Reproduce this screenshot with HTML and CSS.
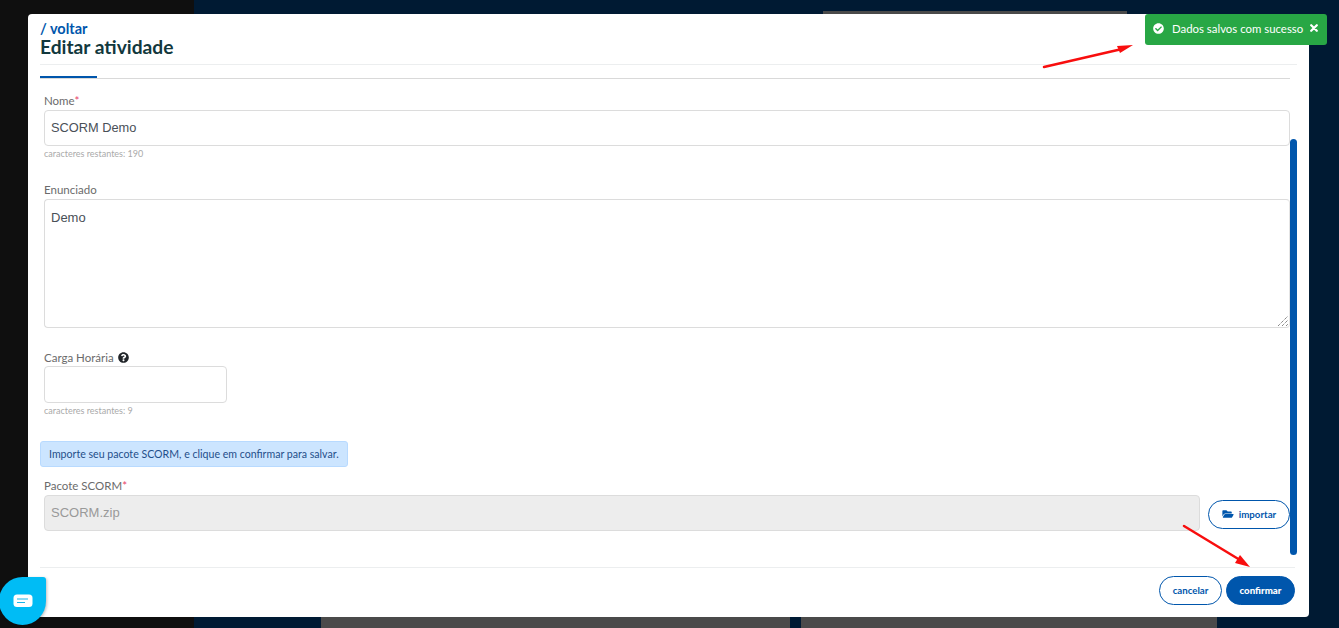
FILE: index.html
```html
<!DOCTYPE html>
<html lang="pt-BR">
<head>
<meta charset="utf-8">
<title>Editar atividade</title>
<link rel="stylesheet" href="styles.css">
</head>
<body>
<div class="page">
  <div class="sidebar"></div>
  <div class="main">
    <div class="strip strip-top"></div>
    <div class="strip strip-left"></div>
    <div class="strip strip-right"></div>
  </div>

  <section class="modal">
    <header class="modal-head">
      <a class="back">/ voltar</a>
      <h1 class="title">Editar atividade</h1>
    </header>
    <div class="tabs"><span class="tab-active"></span></div>
    <div class="modal-body">
      <form class="form">
        <label class="label label-nome">Nome<span class="req">*</span></label>
        <div class="input input-name">SCORM Demo</div>
        <p class="hint">caracteres restantes: 190</p>

        <label class="label label-enun">Enunciado</label>
        <div class="textarea">Demo
          <svg class="resize" width="12" height="12" viewBox="0 0 12 12"><path d="M1 11 11 1M5 11 11 5M9 11 11 9" stroke="#555" stroke-width="1" stroke-dasharray="1 1" fill="none"/></svg>
        </div>

        <label class="label label-carga">Carga Horária<svg class="help" width="11" height="11" viewBox="0 0 512 512"><path fill="#212529" d="M504 256c0 137-111 248-248 248S8 393 8 256 119 8 256 8s248 111 248 248zM263 90c-54 0-89 23-116 64-4 5-2 12 3 16l35 26c5 4 13 3 17-2 18-23 30-36 57-36 20 0 45 13 45 33 0 15-12 23-33 34-23 13-54 30-54 71v4c0 7 5 12 12 12h56c7 0 12-5 12-12v-1c0-29 83-30 83-107 0-58-60-102-117-102zm-7 249c-25 0-46 21-46 46s21 46 46 46 46-21 46-46-21-46-46-46z"/></svg></label>
        <div class="input input-small"></div>
        <p class="hint">caracteres restantes: 9</p>

        <div class="alert">Importe seu pacote SCORM, e clique em confirmar para salvar.</div>

        <label class="label label-pacote">Pacote SCORM<span class="req">*</span></label>
        <div class="file-row">
          <div class="input input-disabled">SCORM.zip</div>
          <button type="button" class="btn btn-outline btn-import">
            <svg width="12" height="10" viewBox="0 0 576 512"><path fill="#0056ac" d="M572.700 292.100 500.300 416.200C489.900 434 469.900 448 448 448H48c-19 0-30.500-20.400-20.700-36.100l72.400-124.100C110 270 130 256 152 256h400c19 0 30.500 16.400 20.700 36.100zM152 224h328v-48c0-26.500-21.500-48-48-48H272l-64-64H48C21.500 64 0 85.500 0 112v278l69-118.300C86 242.600 117.700 224 152 224z"/></svg>
            importar
          </button>
        </div>
      </form>
      <div class="scrollbar"></div>
    </div>
    <footer class="modal-foot">
      <button type="button" class="btn btn-outline btn-cancel">cancelar</button>
      <button type="button" class="btn btn-solid">confirmar</button>
    </footer>
  </section>

  <div class="toast">
    <svg width="11" height="11" viewBox="0 0 512 512"><path fill="#fff" d="M504 256c0 137-111 248-248 248S8 393 8 256 119 8 256 8s248 111 248 248zM227 387l184-184c6-6 6-16 0-22l-23-23c-6-6-16-6-22 0L216 308l-70-70c-6-6-16-6-22 0l-23 23c-6 6-6 16 0 22l104 104c6 6 16 6 22 0z"/></svg>
    <span class="toast-text">Dados salvos com sucesso</span>
    <svg class="toast-close" width="8" height="8" viewBox="0 0 10 10"><path d="M1.500 1.500 8.500 8.500M8.500 1.500 1.500 8.500" stroke="#fff" stroke-width="2.800" stroke-linecap="round"/></svg>
  </div>

  <div class="chat">
    <svg width="20" height="14" viewBox="0 0 20 14"><rect x="0.500" y="0.500" width="19" height="12.500" rx="3.500" fill="#fff"/><path d="M4 5h11M4 8.500h8" stroke="#1ab5ea" stroke-width="1.200"/></svg>
  </div>

  <svg class="arrows" width="1339" height="628" viewBox="0 0 1339 628">
    <path d="M1044 67 1122 49" stroke="#f80e0e" stroke-width="2.500" stroke-linecap="round"/>
    <path d="M1133 45 1117 46 1120 53Z" fill="#f80e0e"/>
    <path d="M1184 526 1240 560" stroke="#f80e0e" stroke-width="2.500" stroke-linecap="round"/>
    <path d="M1250 567 1240 555 1235 563Z" fill="#f80e0e"/>
  </svg>
</div>
</body>
</html>
```
FILE: styles.css
```css
* { box-sizing: border-box; }
html, body { margin: 0; padding: 0; height: 100%; overflow: hidden; }
body { font-family: "Lato", "Open Sans", sans-serif; }

.page { position: relative; width: 1339px; height: 628px; display: flex; overflow: hidden; }
.sidebar { width: 194px; background: #0f0f0f; }
.main { flex: 1; background: #001a33; position: relative; }
.strip { position: absolute; background: #4a4a4a; }
.strip-top { left: 629px; top: 11px; width: 304px; height: 3px; }
.strip-left { left: 127px; top: 617px; width: 469px; height: 11px; }
.strip-right { left: 607px; top: 617px; width: 416px; height: 11px; }

.modal { position: absolute; left: 28px; top: 14px; width: 1281px; height: 603px; background: #fff; border-radius: 4px; display: flex; flex-direction: column; }
.modal-head { margin: 0 12px; padding-top: 7px; height: 51px; border-bottom: 1px solid #eceeef; }
.back { display: block; font-size: 14.5px; line-height: 15px; font-weight: 700; color: #0056ac; }
.title { margin: -1px 0 0; font-size: 19.2px; line-height: 23px; font-weight: 700; color: #12383d; }
.tabs { margin: 11px 19px 0 12px; height: 3px; border-bottom: 1px solid #d9d9d9; position: relative; }
.tab-active { display: block; width: 57px; height: 2px; background: #0056ac; }

.modal-body { flex: 1; min-height: 0; display: flex; position: relative; }
.form { flex: 1; padding: 0 19px 0 12px; }
.label { display: block; font-size: 11.5px; line-height: 14px; color: #6b6b6b; padding-left: 4px; }
.req { color: #e8436a; }
.label-nome { margin-top: 15px; }
.label-enun { margin-top: 24px; }
.label-carga { margin-top: 23px; }
.label-pacote { margin-top: 12px; }
.help { margin-left: 4px; vertical-align: -1px; }
.input { margin: 2px 0 0 4px; height: 36px; border: 1px solid #dcdcdc; border-radius: 4px; font-family: "Liberation Sans", Arial, sans-serif; font-size: 13px; line-height: 33px; color: #495057; padding: 0 6px; }
.input-name { font-size: 12.8px; }
.textarea { position: relative; margin: 2px 0 0 4px; height: 129px; border: 1px solid #dcdcdc; border-right-color: #e4e4e4; border-radius: 4px; font-family: "Liberation Sans", Arial, sans-serif; font-size: 13px; line-height: 16px; color: #495057; padding: 10px 6px; }
.resize { position: absolute; right: 0; bottom: 0; }
.input-small { width: 183px; height: 37px; margin-top: 1px; }
.hint { margin: 2px 0 0 4px; font-size: 9px; line-height: 11px; color: #aaa; }
.alert { margin-top: 25px; width: 308px; height: 26px; background: #cce5ff; border: 1px solid #b8daff; border-radius: 3px; font-size: 10.6px; line-height: 24px; color: #1f4f8a; padding-left: 8px; white-space: nowrap; }
.file-row { display: flex; align-items: center; margin-top: 2px; padding-left: 0; gap: 8px; }
.input-disabled { flex: 1; margin: 0 0 0 4px; background: #ededed; color: #999; }
.btn { font-family: inherit; border-radius: 15px; font-size: 9.7px; font-weight: 700; height: 29px; padding: 0 0 2px; cursor: pointer; }
.btn-outline { background: #fff; border: 1px solid #0056ac; color: #0056ac; }
.btn-solid { background: #0056ac; border: 1px solid #0056ac; color: #fff; width: 69px; font-weight: 900; }
.btn-import { width: 82px; display: flex; align-items: center; justify-content: center; gap: 5px; margin-top: 3px; }
.btn-cancel { width: 63px; }
.scrollbar { position: absolute; left: 1262px; top: 60px; width: 7px; height: 416px; background: #0056ac; border-radius: 4px; }

.modal-foot { margin: 0 12px; height: 50px; border-top: 1px solid #eceeef; display: flex; justify-content: flex-end; align-items: flex-start; gap: 4px; padding-top: 8px; margin-right: 14px; }

.toast { position: absolute; left: 1145px; top: 14px; width: 182px; height: 31px; background: #28a745; border-radius: 3px; display: flex; align-items: center; color: #fff; font-size: 11.4px; padding-left: 8px; padding-bottom: 3px; }
.toast-text { margin-left: 8px; }
.toast-close { margin-left: 7px; }

.chat { position: absolute; left: -1px; top: 577px; width: 47px; height: 48px; background: #00bcf5; border-radius: 50% 3px 50% 50%; display: flex; align-items: center; justify-content: center; box-shadow: 1px 1px 3px rgba(0,0,0,.25); }
.arrows { position: absolute; left: 0; top: 0; pointer-events: none; }
```
